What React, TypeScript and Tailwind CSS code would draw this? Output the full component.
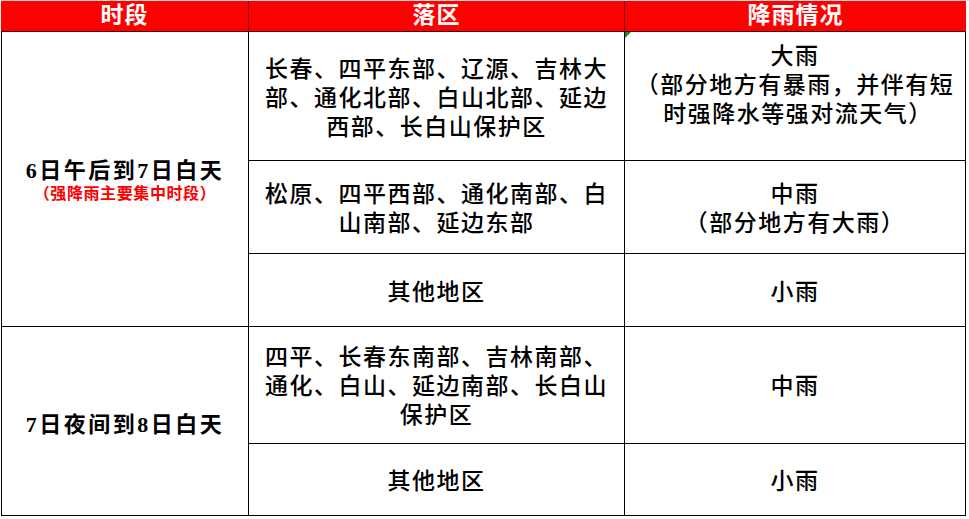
import React from "react";

const F = { fontFamily: '"Liberation Serif", "Noto Sans CJK SC", serif' };

function Cell({ children, className = "" }: { children: React.ReactNode; className?: string }) {
  return (
    <div className={"bg-white flex flex-col items-center justify-center text-center text-black " + className}>
      {children}
    </div>
  );
}

export default function App() {
  const body = "text-[23px] leading-[29px] tracking-[1.5px] font-medium";
  const left = "text-[22px] leading-[24px] tracking-[2.5px] font-semibold";
  return (
    <div className="w-[969px] h-[519px] bg-white overflow-hidden" style={F}>
      <div className="h-px bg-[#d9d9d9]" />
      <div className="ml-px w-[965px] h-[31px] flex bg-[#ff0000] border-b border-[#4a0000] text-white text-[23px] font-bold tracking-[1px] leading-[30px]">
        <div className="w-[248px] border-r border-[#7a0000] text-center">时段</div>
        <div className="w-[376px] border-r border-[#7a0000] text-center">落区</div>
        <div className="w-[341px] text-center">降雨情况</div>
      </div>
      <div className="ml-px w-[965px] grid grid-cols-[246px_375px_340px] grid-rows-[128px_92px_72px_116px_71px] gap-px bg-black border-l border-r border-b border-black">
        <Cell className="row-span-3 pt-[6px]">
          <div className={left}>6日午后到7日白天</div>
          <div className="text-[16px] leading-[22px] tracking-[0.6px] font-bold text-[#ff0000]">（强降雨主要集中时段）</div>
        </Cell>
        <Cell className={"px-[14px] pt-[4px] " + body}>长春、四平东部、辽源、吉林大部、通化北部、白山北部、延边西部、长白山保护区</Cell>
        <Cell className={"relative pb-[22px] " + body}>
          <div className="absolute left-0 top-0 w-0 h-0 border-t-[6px] border-r-[6px] border-t-[#1f8a1f] border-r-transparent" />
          <div>大雨</div>
          <div className="whitespace-nowrap">（部分地方有暴雨，并伴有短</div>
          <div className="whitespace-nowrap pl-[6px]">时强降水等强对流天气）</div>
        </Cell>
        <Cell className={"px-[14px] pt-[4px] " + body}>松原、四平西部、通化南部、白山南部、延边东部</Cell>
        <Cell className={"px-[8px] pt-[4px] " + body}>
          <div>中雨</div>
          <div>（部分地方有大雨）</div>
        </Cell>
        <Cell className={"pt-[4px] " + body}>其他地区</Cell>
        <Cell className={"pt-[4px] " + body}>小雨</Cell>
        <Cell className="row-span-2 pt-[8px]">
          <div className={left}>7日夜间到8日白天</div>
        </Cell>
        <Cell className={"px-[14px] pt-[2px] " + body}>四平、长春东南部、吉林南部、通化、白山、延边南部、长白山保护区</Cell>
        <Cell className={"pt-[2px] " + body}>中雨</Cell>
        <Cell className={"pt-[4px] " + body}>其他地区</Cell>
        <Cell className={"pt-[4px] " + body}>小雨</Cell>
      </div>
    </div>
  );
}
